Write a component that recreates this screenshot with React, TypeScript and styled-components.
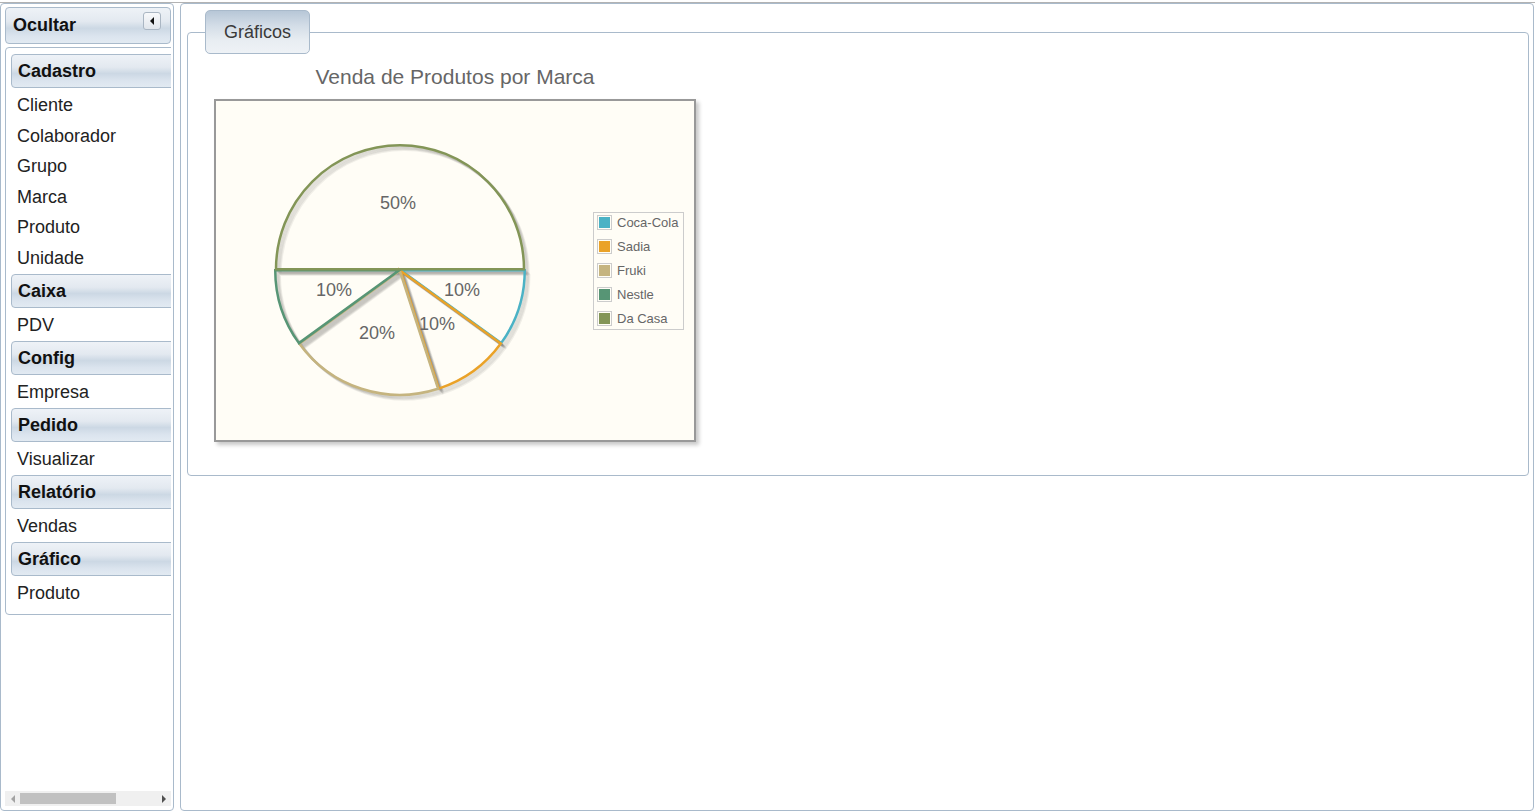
import styled, { createGlobalStyle } from "styled-components";

const GlobalStyle = createGlobalStyle`
  html, body {
    margin: 0;
    padding: 0;
    background: #fff;
  }
  body {
    font-family: "Liberation Sans", Arial, sans-serif;
  }
`;

const line = "#a9bacb";

const headerGradient = `linear-gradient(to bottom, #eef2f7 0%, #e3e9f0 38%, #ccd8e4 58%, #dbe4ee 80%, #e2eaf2 100%)`;

const Page = styled.div`
  height: 812px;
  padding-top: 2px;
  box-sizing: border-box;
  overflow: hidden;
`;

const Frame = styled.div`
  border-top: 1px solid #b3b3b3;
  display: flex;
  gap: 6px;
  height: 809px;
  box-sizing: border-box;
`;

const WestPane = styled.aside`
  width: 174px;
  height: 808px;
  box-sizing: border-box;
  border: 1px solid ${line};
  border-radius: 4px;
  display: flex;
  flex-direction: column;
  padding: 3px 2px 4px 4px;
`;

const PaneHeader = styled.div`
  height: 37px;
  box-sizing: border-box;
  border: 1px solid ${line};
  border-radius: 4px;
  background: ${headerGradient};
  display: flex;
  justify-content: space-between;
  align-items: center;
  padding: 0 9px 0 7px;
  font-weight: bold;
  font-size: 18px;
  color: #111;
`;

const Toggle = styled.span`
  align-self: flex-start;
  margin-top: 4px;
  width: 18px;
  height: 18px;
  box-sizing: border-box;
  border: 1px solid #aab6c3;
  border-radius: 3px;
  background: linear-gradient(to bottom, #f8f9fb, #e1e6ec);
  display: flex;
  align-items: center;
  justify-content: center;

  &::before {
    content: "";
    width: 0;
    height: 0;
    border-top: 4px solid transparent;
    border-bottom: 4px solid transparent;
    border-right: 4px solid #111;
    margin-left: -1px;
  }
`;

const Scroller = styled.div`
  margin-top: 3px;
  flex: 1;
  width: 166px;
  overflow: hidden;
`;

const MenuBox = styled.nav`
  width: 200px;
  box-sizing: border-box;
  border: 1px solid ${line};
  border-radius: 4px;
  padding: 6px 0 8px 5px;
`;

const MenuHeader = styled.div`
  height: 34px;
  box-sizing: border-box;
  border: 1px solid ${line};
  border-radius: 4px;
  background: ${headerGradient};
  padding-left: 6px;
  font-weight: bold;
  font-size: 18px;
  line-height: 32px;
  color: #111;

  &:not(:first-child) {
    margin-top: 2.5px;
  }
`;

const MenuItem = styled.div`
  height: 30.5px;
  box-sizing: border-box;
  padding: 2px 0 0 6px;
  line-height: 30px;
  font-size: 18px;
  color: #222;
`;

const HScroll = styled.div`
  width: 166px;
  height: 15px;
  background: #f0f0f0;
  display: flex;
  align-items: center;
`;

const Arrow = styled.span<{ $dir: "left" | "right" }>`
  width: 15px;
  display: flex;
  justify-content: center;

  &::before {
    content: "";
    width: 0;
    height: 0;
    border-top: 4px solid transparent;
    border-bottom: 4px solid transparent;
    ${(p) =>
      p.$dir === "left"
        ? "border-right: 4px solid #a3a3a3;"
        : "border-left: 4px solid #505050;"}
  }
`;

const Thumb = styled.span`
  width: 96px;
  height: 11px;
  background: #c1c1c1;
  margin-right: auto;
`;

const CenterPane = styled.main`
  width: 1354px;
  height: 808px;
  box-sizing: border-box;
  border: 1px solid ${line};
  border-radius: 4px;
  padding: 6px 4px 0 6px;
`;

const Fieldset = styled.fieldset`
  margin: 0;
  border: 1px solid ${line};
  border-radius: 4px;
  padding: 0 0 33px 0;
`;

const Legend = styled.legend`
  margin-left: 17px;
  height: 44px;
  box-sizing: border-box;
  padding: 0 18px;
  border: 1px solid ${line};
  border-radius: 5px;
  background: linear-gradient(to bottom, #b7c7d7 0%, #d3dde7 35%, #e8edf2 70%, #eef2f6 100%);
  font-size: 18px;
  line-height: 42px;
  color: #3a3a3a;
`;

const Chart = styled.div`
  width: 482px;
  margin-left: 26px;
`;

const ChartTitle = styled.div`
  margin: 11px 0 10px;
  text-align: center;
  font-size: 21px;
  line-height: 24px;
  color: #666;
`;

const PlotBox = styled.div`
  position: relative;
  width: 482px;
  height: 343px;
  box-sizing: border-box;
  border: 2px solid #999;
  background: #fffdf6;
  box-shadow: 3px 3px 4px rgba(0, 0, 0, 0.22);

  svg {
    display: block;
  }
`;

const LegendBox = styled.div`
  position: absolute;
  left: 377px;
  top: 111px;
  width: 91px;
  height: 118px;
  box-sizing: border-box;
  border: 1px solid #ccc;
  padding: 0 3px;
`;

const LegendList = styled.div`
  margin-top: -3px;
`;

const LegendRow = styled.div`
  height: 24px;
  display: flex;
  align-items: center;
  gap: 5px;
  font-size: 13px;
  color: #666;
`;

const Swatch = styled.span<{ $color: string }>`
  width: 15px;
  height: 15px;
  box-sizing: border-box;
  border: 1px solid #ccc;
  padding: 1px;

  &::before {
    content: "";
    display: block;
    width: 11px;
    height: 11px;
    background: ${(p) => p.$color};
  }
`;

const menu: { title: string; items: string[] }[] = [
  { title: "Cadastro", items: ["Cliente", "Colaborador", "Grupo", "Marca", "Produto", "Unidade"] },
  { title: "Caixa", items: ["PDV"] },
  { title: "Config", items: ["Empresa"] },
  { title: "Pedido", items: ["Visualizar"] },
  { title: "Relatório", items: ["Vendas"] },
  { title: "Gráfico", items: ["Produto"] },
];

const slices = [
  { label: "Coca-Cola", value: 10, color: "#4bb2c5", lx: 246, ly: 189 },
  { label: "Sadia", value: 10, color: "#eaa228", lx: 221, ly: 223 },
  { label: "Fruki", value: 20, color: "#c5b47f", lx: 161, ly: 232 },
  { label: "Nestle", value: 10, color: "#579575", lx: 118, ly: 189 },
  { label: "Da Casa", value: 50, color: "#839557", lx: 182, ly: 102 },
];

const CX = 184;
const CY = 169;
const R = 124;
const MARGIN = 0.8;

function slicePath(a0: number, a1: number, dx: number, dy: number) {
  const mid = (a0 + a1) / 2;
  const ox = CX + Math.cos(mid) * MARGIN + dx;
  const oy = CY + Math.sin(mid) * MARGIN + dy;
  const x0 = ox + Math.cos(a0) * R;
  const y0 = oy + Math.sin(a0) * R;
  const x1 = ox + Math.cos(a1) * R;
  const y1 = oy + Math.sin(a1) * R;
  const large = a1 - a0 > Math.PI ? 1 : 0;
  return `M${ox} ${oy} L${x0} ${y0} A${R} ${R} 0 ${large} 1 ${x1} ${y1} Z`;
}

function PieChart() {
  const total = slices.reduce((s, x) => s + x.value, 0);
  let acc = 0;
  const arcs = slices.map((s) => {
    const a0 = (acc / total) * Math.PI * 2;
    acc += s.value;
    const a1 = (acc / total) * Math.PI * 2;
    return { ...s, a0, a1 };
  });
  return (
    <svg width="478" height="339" viewBox="0 0 478 339">
      {arcs.map((a) =>
        [1, 2, 3, 4, 5].map((k) => (
          <path
            key={`${a.label}-s${k}`}
            d={slicePath(a.a0, a.a1, k * 0.9, k * 0.9)}
            fill="none"
            stroke="rgba(0,0,0,0.06)"
            strokeWidth="2.5"
            strokeLinejoin="round"
          />
        ))
      )}
      {arcs.map((a) => (
        <path
          key={a.label}
          d={slicePath(a.a0, a.a1, 0, 0)}
          fill="none"
          stroke={a.color}
          strokeWidth="2.5"
          strokeLinejoin="miter"
        />
      ))}
      {arcs.map((a) => (
        <text
          key={`${a.label}-t`}
          x={a.lx}
          y={a.ly}
          textAnchor="middle"
          dominantBaseline="central"
          fontSize="18"
          fontFamily='"Liberation Sans", Arial, sans-serif'
          fill="#666"
        >
          {a.value}%
        </text>
      ))}
    </svg>
  );
}

export default function App() {
  return (
    <>
      <GlobalStyle />
      <Page>
        <Frame>
          <WestPane>
            <PaneHeader>
              <span>Ocultar</span>
              <Toggle />
            </PaneHeader>
            <Scroller>
              <MenuBox>
                {menu.map((group) => [
                  <MenuHeader key={group.title}>{group.title}</MenuHeader>,
                  ...group.items.map((item) => (
                    <MenuItem key={`${group.title}-${item}`}>{item}</MenuItem>
                  )),
                ])}
              </MenuBox>
            </Scroller>
            <HScroll>
              <Arrow $dir="left" />
              <Thumb />
              <Arrow $dir="right" />
            </HScroll>
          </WestPane>
          <CenterPane>
            <Fieldset>
              <Legend>Gráficos</Legend>
              <Chart>
                <ChartTitle>Venda de Produtos por Marca</ChartTitle>
                <PlotBox>
                  <PieChart />
                  <LegendBox>
                    <LegendList>
                      {slices.map((s) => (
                        <LegendRow key={s.label}>
                          <Swatch $color={s.color} />
                          {s.label}
                        </LegendRow>
                      ))}
                    </LegendList>
                  </LegendBox>
                </PlotBox>
              </Chart>
            </Fieldset>
          </CenterPane>
        </Frame>
      </Page>
    </>
  );
}
